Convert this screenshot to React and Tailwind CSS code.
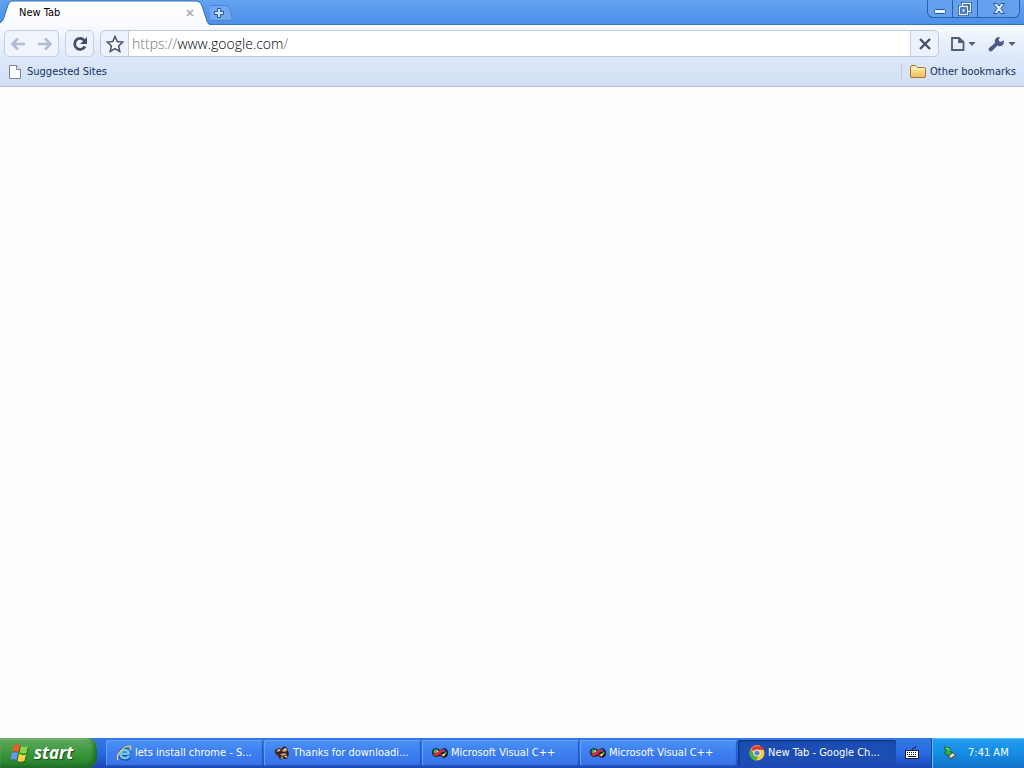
import React from "react";

function TabShape() {
  return (
    <svg className="absolute inset-0 h-full w-full" viewBox="0 0 210 25" preserveAspectRatio="none" aria-hidden="true">
      <defs>
        <linearGradient id="tabFill" x1="0" y1="0" x2="0" y2="1">
          <stop offset="0" stopColor="#ffffff" />
          <stop offset="1" stopColor="#f9fbfe" />
        </linearGradient>
      </defs>
      <path d="M0 25V23C3 21 4 18 5 14L8 5C9 2 11 1 13 1H195C199 1 201 3 202 6L206 18C207 22 208 24 210 25Z" fill="url(#tabFill)" />
      <path d="M0 23C3 21 4 18 5 14L8 5C9 2 11 1 13 1H195C199 1 201 3 202 6L206 18C207 22 208 24 210 24.500" fill="none" stroke="#2f6cba" strokeWidth="1" />
    </svg>
  );
}

function PageIcon({ className }) {
  return (
    <svg className={className} viewBox="0 0 14 16" aria-hidden="true">
      <path d="M1.500 1.500H8.500L12.500 5.500V14.500H1.500Z" fill="#fff" stroke="#7d8492" />
      <path d="M8.500 1.500V5.500H12.500" fill="#e4e9f2" stroke="#7d8492" />
    </svg>
  );
}

function ArrowIcon({ forward }) {
  return (
    <svg className={forward ? "h-4 w-4 rotate-180" : "h-4 w-4"} viewBox="0 0 16 16" fill="none" stroke="#b0bdd4" strokeWidth="2.600" aria-hidden="true">
      <path d="M2.500 8H15M8 2.500L2.500 8L8 13.500" />
    </svg>
  );
}

function Caret() {
  return (
    <svg className="h-1 w-2" viewBox="0 0 8 4" aria-hidden="true">
      <path d="M0.500 0H7.500L4 4Z" fill="#505d7c" />
    </svg>
  );
}

function WindowsFlag() {
  return (
    <svg className="h-5 w-5 shrink-0" viewBox="0 0 20 20" aria-hidden="true">
      <g transform="translate(.8 .9)" fill="#17511b" opacity=".6">
        <path d="M4 2Q7 .5 10 2L8.500 9Q5.500 7.500 2.500 9ZM11 3Q14 5 18 3L16.500 10Q13 11.500 9.500 9.500ZM2 10Q5 8.500 8 10L6.500 17Q3.500 15.500.5 17ZM9 11Q12.500 13 16 11.500L14.500 18Q11 19.500 7.500 18Z" />
      </g>
      <path d="M4 2Q7 .5 10 2L8.500 9Q5.500 7.500 2.500 9Z" fill="#f05a2c" />
      <path d="M11 3Q14 5 18 3L16.500 10Q13 11.500 9.500 9.500Z" fill="#8bd347" />
      <path d="M2 10Q5 8.500 8 10L6.500 17Q3.500 15.500 .5 17Z" fill="#6496f5" />
      <path d="M9 11Q12.500 13 16 11.500L14.500 18Q11 19.500 7.500 18Z" fill="#ffd33e" />
    </svg>
  );
}

function ExplorerIcon() {
  return (
    <svg className="h-4 w-4 shrink-0" viewBox="0 0 16 16" fill="none" aria-hidden="true">
      <path d="M13 9H5M4.500 8.500C4.500 3.700 12.500 3.500 13 8.500M4.400 9C4.600 14.500 11.500 14.500 13 11.500" stroke="#174f9b" strokeWidth="4.400" />
      <path d="M13.300 8.800H4.500M4.500 8.500C4.500 4 12.500 4 13 8.500M4.400 9C4.600 14 11.500 14 13 11" stroke="#6fc7f4" strokeWidth="2.600" />
      <path d="M2.500 15C-1 13 4 4 11 1.500C15 .2 15.500 2 14 5" stroke="#f4cf62" strokeWidth="1.300" />
    </svg>
  );
}

function BirdIcon() {
  return (
    <svg className="h-4 w-4 shrink-0" viewBox="0 0 16 16" aria-hidden="true">
      <path d="M1 5L5 3L7 4L10 1L13 3L14 6L15 9L13 14H10L9 12L7 15L5 13L4 10L1 8Z" fill="#32251f" />
      <path d="M2 6L5 4L6 6L4 7ZM8 5L12 3L13 6L9 7ZM6 9L11 8L13 10L8 11ZM6 13L9 11L8 14Z" fill="#c79c63" />
      <path d="M4 4L7 5L5 6ZM10 3L13 5L10 5ZM10 11H13V13Z" fill="#f4dfbb" />
      <path d="M1 10L5 8L4 11Z" fill="#6f3320" />
    </svg>
  );
}

function VisualIcon() {
  return (
    <svg className="h-4 w-4 shrink-0" viewBox="0 0 16 16" aria-hidden="true">
      <path d="M0 7Q0 4 4 3L8 5L12 3Q16 4 16 8T12 13L8 11L4 12Q0 11 0 7Z" fill="#161925" />
      <path d="M1 7L3 4L6 5L3 9Z" fill="#4bb252" />
      <path d="M5 5L7 6L4 9Z" fill="#eee9b1" />
      <path d="M9 5L12 4L14 6L11 7Z" fill="#3c61db" />
      <path d="M9 10L13 8L13 10L11 12Z" fill="#f3df61" />
      <path d="M13 6L15 8L13 10Z" fill="#43aa4c" />
      <path d="M1 9L4 8L10 4L12 6L5 11H3Z" fill="#d92f31" />
      <path d="M8 8L12 12L10 12L7 10Z" fill="#8e2025" />
    </svg>
  );
}

function ChromeIcon() {
  return (
    <svg className="h-4 w-4 shrink-0" viewBox="0 0 16 16" aria-hidden="true">
      <circle cx="8" cy="8" r="7.500" fill="#f6cf41" />
      <path d="M8 8L1.500 4.200A7.500 7.500 0 0 1 15 5H8Z" fill="#dc3d31" />
      <path d="M1.500 4.200A7.500 7.500 0 0 0 7 15.500L10 10L5 9Z" fill="#53a944" />
      <circle cx="8" cy="8" r="3.600" fill="#f5f8fb" />
      <circle cx="8" cy="8" r="2.600" fill="#5b88b8" />
      <path d="M2 4Q5-.5 11 1" stroke="#f78c76" fill="none" />
    </svg>
  );
}

const tasks = [
  { label: "lets install chrome - S...", Icon: ExplorerIcon },
  { label: "Thanks for downloadi...", Icon: BirdIcon },
  { label: "Microsoft Visual C++", Icon: VisualIcon },
  { label: "Microsoft Visual C++", Icon: VisualIcon },
  { label: "New Tab - Google Ch...", Icon: ChromeIcon, active: true },
];

function WindowControls() {
  return (
    <div className="mr-1 flex h-[18px] rounded-b-md border border-t-0 border-[#285fae] bg-[#64a0ed]">
      <button aria-label="Minimize" className="flex w-[25px] items-center justify-center border-r border-[#285fae]">
        <svg className="h-4 w-4" viewBox="0 0 16 16" aria-hidden="true"><rect x="2.500" y="8.500" width="11" height="4" rx="1" fill="#e9f3ff" stroke="#285896" /></svg>
      </button>
      <button aria-label="Restore" className="flex w-[25px] items-center justify-center border-r border-[#285fae]">
        <svg className="h-4 w-4" viewBox="0 0 16 16" fill="none" aria-hidden="true">
          <path d="M5.500 5V2.500H13.500V10.500H11M2.500 5.500H10.500V13.500H2.500ZM6 9H7V10H6Z" stroke="#285896" strokeWidth="3" />
          <path d="M5.500 5V2.500H13.500V10.500H11M2.500 5.500H10.500V13.500H2.500ZM6 9H7V10H6Z" stroke="#e9f3ff" strokeWidth="1.300" />
        </svg>
      </button>
      <button aria-label="Close window" className="flex w-[41px] items-center justify-center">
        <svg className="h-4 w-4" viewBox="0 0 16 16" fill="none" aria-hidden="true">
          <path d="M2.500 2.500H6L8 5L10 2.500H13.500L10 7.500L13.500 12.500H10L8 10L6 12.500H2.500L6 7.500Z" fill="#dcecff" stroke="#285896" />
        </svg>
      </button>
    </div>
  );
}

export default function App() {
  return (
    <div className="flex min-h-screen flex-col bg-[#fefefe] font-['DejaVu_Sans_Condensed','DejaVu_Sans',sans-serif] text-[11px] leading-4 text-black">
      <header>
        <div className="flex h-[25px] items-start justify-between border-b border-[#3972bd] bg-linear-to-b from-[#64a3ef] to-[#4b8fea]">
          <div className="flex">
            <div className="relative -mb-px h-[25px] w-[210px]">
              <TabShape />
              <div className="relative flex h-full items-center justify-between pr-[14px] pl-[19px]">
                <span>New Tab</span>
                <button aria-label="Close tab" className="flex h-3 w-3 items-center justify-center">
                  <svg className="h-2 w-2" viewBox="0 0 8 8" aria-hidden="true"><path d="M1 1L7 7M7 1L1 7" stroke="#a6a9ae" strokeWidth="1.600" /></svg>
                </button>
              </div>
            </div>
            <button aria-label="New tab" className="mt-[5px] h-[18px] w-6">
              <svg className="h-full w-full" viewBox="0 0 24 18" fill="none" aria-hidden="true">
                <path d="M-3 .5H16Q19 .5 20 4L22 12Q23 15.500 20 15.500H2Q-1 15.500-2 12Z" fill="#70a8ef" stroke="#4b84d0" />
                <path d="M7.500 3.500H10.500V6.500H13.500V9.500H10.500V12.500H7.500V9.500H4.500V6.500H7.500Z" fill="#cae4ff" stroke="#245898" />
              </svg>
            </button>
          </div>
          <WindowControls />
        </div>

        <div className="border-b border-[#b3bfcc] bg-linear-to-b from-[#f8fbff] via-[#dfe9fa] to-[#d0dff4]">
          <div className="flex items-center px-1 pt-[5px]">
            <div className="flex h-[27px] w-[55px] shrink-0 items-center justify-around rounded-[5px] border border-[#c2cee2] bg-[#eff4fd]">
              <button aria-label="Back"><ArrowIcon /></button>
              <button aria-label="Forward"><ArrowIcon forward /></button>
            </div>
            <button aria-label="Reload" className="ml-1.5 flex h-[27px] w-[29px] shrink-0 items-center justify-center rounded-[5px] border border-[#c2cee2] bg-[#edf3fd]">
              <svg className="h-4 w-4" viewBox="0 0 16 16" fill="none" aria-hidden="true">
                <path d="M12.500 4.500A5.500 5.500 0 1 0 13 10.500" stroke="#414d6b" strokeWidth="2.800" />
                <path d="M15 1V8H8Z" fill="#414d6b" />
              </svg>
            </button>
            <div className="ml-1.5 flex h-[27px] min-w-0 flex-1 rounded-[5px] border border-[#becbdd] bg-[#edf3fd]">
              <button aria-label="Bookmark this page" className="flex w-[27px] shrink-0 items-center justify-center">
                <svg className="h-[18px] w-[18px]" viewBox="0 0 18 18" aria-hidden="true"><path d="M9 1.500L11.200 6.500L16.800 7.100L12.600 10.900L13.800 16.400L9 13.600L4.200 16.400L5.400 10.900L1.200 7.100L6.800 6.500Z" fill="#fafcff" stroke="#46516f" strokeWidth="1.500" /></svg>
              </button>
              <div role="textbox" aria-label="Address" contentEditable suppressContentEditableWarning className="min-w-0 flex-1 overflow-hidden border-x border-[#c5cfde] bg-white px-[3px] font-['Open_Sans',sans-serif] text-sm leading-[25px] font-light whitespace-nowrap outline-none">
                <span className="text-[#777777]">https://</span>www.google.com<span className="text-[#777777]">/</span>
              </div>
              <button aria-label="Stop loading" className="flex w-[27px] shrink-0 items-center justify-center">
                <svg className="h-3 w-3" viewBox="0 0 12 12" aria-hidden="true"><path d="M1 1L11 11M11 1L1 11" stroke="#424c6b" strokeWidth="2.300" /></svg>
              </button>
            </div>
            <button aria-label="Page menu" className="ml-3 flex shrink-0 items-center gap-[3px]">
              <svg className="h-4 w-[14px]" viewBox="0 0 14 16" fill="none" aria-hidden="true"><path d="M1 2H8L12.500 6V14H1Z M8 2V6H12.500" stroke="#505d7c" strokeWidth="1.800" /></svg>
              <Caret />
            </button>
            <button aria-label="Tools menu" className="mr-1 ml-3 flex shrink-0 items-center gap-[3px]">
              <svg className="h-4 w-[17px]" viewBox="0 0 17 16" aria-hidden="true"><path d="M1 12L7 7Q6 3 9 1.500L12 .7L10.500 4L12 6L16 4.500Q16 9 13 10Q11 10.700 9.500 9.500L4 15Q2.500 16 1.200 14.800Q0 13.500 1 12Z" fill="#4a5a86" /></svg>
              <Caret />
            </button>
          </div>
          <nav className="flex h-[29px] items-center justify-between pr-2 pl-2 text-[#122f66]">
            <a href="#suggested" className="flex items-center gap-[5px]"><PageIcon className="h-4 w-[14px]" />Suggested Sites</a>
            <button className="flex items-center gap-1 border-l border-[#becbe0] pl-2">
              <svg className="h-4 w-4" viewBox="0 0 16 16" aria-hidden="true">
                <defs><linearGradient id="folderFill" x1="0" y1="0" x2="0" y2="1"><stop stopColor="#fff0b5" /><stop offset="1" stopColor="#efbd5c" /></linearGradient></defs>
                <path d="M.5 13V3Q.5 1.500 2 1.500H5.500L7.500 3.500H14Q15.500 3.500 15.500 5V12Q15.500 13.500 14 13.500H1Z" fill="url(#folderFill)" stroke="#a8742c" />
                <path d="M1.500 5H14.500" stroke="#fff7cc" />
              </svg>
              Other bookmarks
            </button>
          </nav>
        </div>
      </header>

      <main className="flex-1" />

      <footer className="flex h-[30px] items-stretch bg-linear-to-b from-[#3379e5] via-[#286ae3] to-[#1b45b5] text-white">
        <button className="mr-[9px] flex w-[97px] shrink-0 items-center gap-1 rounded-r-[10px] bg-linear-to-b from-[#62aa60] via-[#3a973b] to-[#277c2c] pl-[10px] font-['Open_Sans',sans-serif] text-[17px] leading-6 font-bold italic shadow-[inset_-3px_-2px_4px_#1d6a24,inset_0_2px_2px_#78b975] [text-shadow:1px_1px_1px_#174d1b]">
          <WindowsFlag />start
        </button>
        <div className="flex min-w-0 flex-1 gap-px py-[2px]">
          {tasks.map(({ label, Icon, active }, index) => (
            <button
              key={index}
              className={
                active
                  ? "flex min-w-0 max-w-[158px] flex-1 items-center gap-[3px] rounded-xs bg-[#1c4db2] pl-[11px] shadow-[inset_1px_1px_2px_#0d2f7b]"
                  : "flex min-w-0 max-w-[158px] flex-1 items-center gap-[3px] rounded-xs bg-linear-to-b from-[#4c91f5] via-[#3c7eef] to-[#3873e8] pl-[10px] shadow-[inset_1px_1px_1px_#66a3f6,inset_-1px_-1px_1px_#2457ba]"
              }
            >
              <Icon /><span className="truncate">{label}</span>
            </button>
          ))}
        </div>
        <button aria-label="Keyboard input" className="flex w-[35px] shrink-0 items-center justify-center pr-1">
          <svg className="h-4 w-4" viewBox="0 0 16 16" aria-hidden="true">
            <path d="M8 5Q8 3 10 3T12 1" fill="none" stroke="#111f4d" />
            <rect x="1.500" y="5.500" width="13" height="8" fill="#fff" stroke="#151c32" />
            <path d="M3 7.500H13M3 9.500H13" stroke="#111" strokeDasharray="1 1" />
            <path d="M4 11.500H12" stroke="#111" />
          </svg>
        </button>
        <div className="flex w-[93px] shrink-0 items-center gap-[10px] border-l border-[#174a9b] bg-linear-to-b from-[#239ded] via-[#148ce6] to-[#1473c9] pl-[10px] shadow-[inset_1px_1px_1px_#5cc6fa]">
          <svg className="h-4 w-4 shrink-0" viewBox="0 0 16 16" aria-hidden="true">
            <path d="M4 10L10 7L15 10L9 15Z" fill="#4c5963" />
            <path d="M6 10L10 8L13 10L9 13Z" fill="#d2dbd7" />
            <path d="M2 2L8 3L8 7L11 7L7 11L2 8L4 7Z" fill="#36ae3c" stroke="#176e36" />
            <path d="M4 3L7 4V6" stroke="#91e77d" fill="none" />
          </svg>
          <time>7:41 AM</time>
        </div>
      </footer>
    </div>
  );
}
